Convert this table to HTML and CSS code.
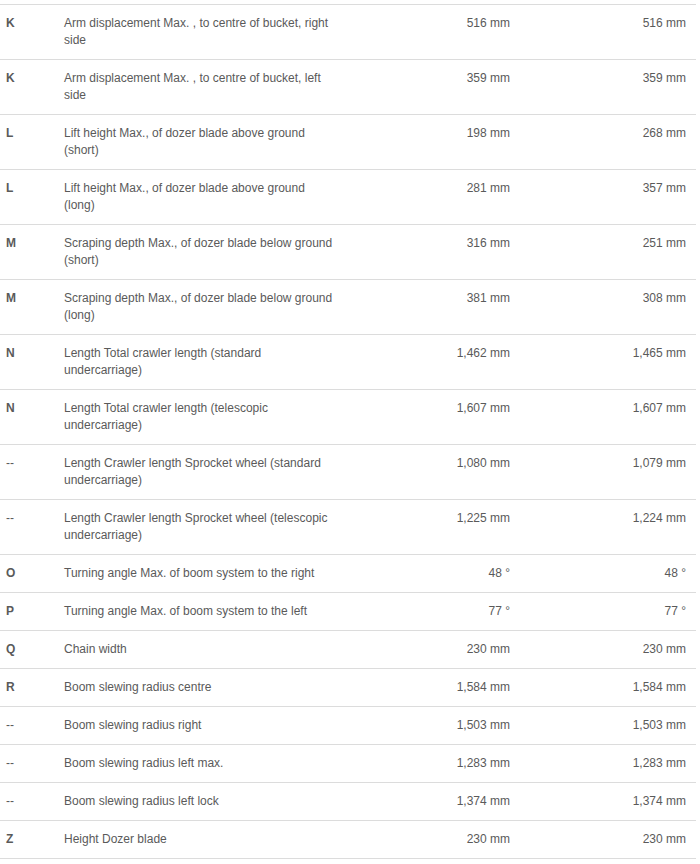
FILE: index.html
```html
<!DOCTYPE html>
<html lang="en">
<head>
<meta charset="utf-8">
<title>Dimensions</title>
<link rel="stylesheet" href="styles.css">
</head>
<body>
<div class="wrap">
<table class="spec">
<colgroup><col class="c-key"><col class="c-desc"><col class="c-val1"><col class="c-val2"></colgroup>
<tbody>
<tr><td class="key">K</td><td class="desc">Arm displacement Max. , to centre of bucket, right side</td><td class="val">516 mm</td><td class="val">516 mm</td></tr>
<tr><td class="key">K</td><td class="desc">Arm displacement Max. , to centre of bucket, left side</td><td class="val">359 mm</td><td class="val">359 mm</td></tr>
<tr><td class="key">L</td><td class="desc">Lift height Max., of dozer blade above ground (short)</td><td class="val">198 mm</td><td class="val">268 mm</td></tr>
<tr><td class="key">L</td><td class="desc">Lift height Max., of dozer blade above ground (long)</td><td class="val">281 mm</td><td class="val">357 mm</td></tr>
<tr><td class="key">M</td><td class="desc">Scraping depth Max., of dozer blade below ground (short)</td><td class="val">316 mm</td><td class="val">251 mm</td></tr>
<tr><td class="key">M</td><td class="desc">Scraping depth Max., of dozer blade below ground (long)</td><td class="val">381 mm</td><td class="val">308 mm</td></tr>
<tr><td class="key">N</td><td class="desc">Length Total crawler length (standard undercarriage)</td><td class="val">1,462 mm</td><td class="val">1,465 mm</td></tr>
<tr><td class="key">N</td><td class="desc">Length Total crawler length (telescopic undercarriage)</td><td class="val">1,607 mm</td><td class="val">1,607 mm</td></tr>
<tr><td class="key dash">--</td><td class="desc">Length Crawler length Sprocket wheel (standard undercarriage)</td><td class="val">1,080 mm</td><td class="val">1,079 mm</td></tr>
<tr><td class="key dash">--</td><td class="desc">Length Crawler length Sprocket wheel (telescopic undercarriage)</td><td class="val">1,225 mm</td><td class="val">1,224 mm</td></tr>
<tr><td class="key">O</td><td class="desc">Turning angle Max. of boom system to the right</td><td class="val">48 °</td><td class="val">48 °</td></tr>
<tr><td class="key">P</td><td class="desc">Turning angle Max. of boom system to the left</td><td class="val">77 °</td><td class="val">77 °</td></tr>
<tr><td class="key">Q</td><td class="desc">Chain width</td><td class="val">230 mm</td><td class="val">230 mm</td></tr>
<tr><td class="key">R</td><td class="desc">Boom slewing radius centre</td><td class="val">1,584 mm</td><td class="val">1,584 mm</td></tr>
<tr><td class="key dash">--</td><td class="desc">Boom slewing radius right</td><td class="val">1,503 mm</td><td class="val">1,503 mm</td></tr>
<tr><td class="key dash">--</td><td class="desc">Boom slewing radius left max.</td><td class="val">1,283 mm</td><td class="val">1,283 mm</td></tr>
<tr><td class="key dash">--</td><td class="desc">Boom slewing radius left lock</td><td class="val">1,374 mm</td><td class="val">1,374 mm</td></tr>
<tr><td class="key">Z</td><td class="desc">Height Dozer blade</td><td class="val">230 mm</td><td class="val">230 mm</td></tr>
</tbody>
</table>
</div>
</body>
</html>
```
FILE: styles.css
```css
html, body {
  margin: 0;
  padding: 0;
  background: #ffffff;
}

.wrap {
  padding-top: 4px;
  width: 696px;
}

.spec {
  width: 696px;
  border-collapse: collapse;
  table-layout: fixed;
  font-family: "Liberation Sans", Arial, sans-serif;
  font-size: 12px;
  line-height: 17px;
  color: #5a5a5a;
}

.c-key { width: 54px; }
.c-desc { width: 292px; }
.c-val1 { width: 174px; }
.c-val2 { width: 176px; }

.spec tr {
  border-top: 1px solid #dcdcdc;
  border-bottom: 1px solid #dcdcdc;
}

.spec td {
  padding: 10px 10px 10px 10px;
  vertical-align: top;
}

.spec td.key {
  padding-left: 6px;
  padding-right: 0;
  font-weight: bold;
  color: #5a5a5a;
}

.spec td.key.dash {
  font-weight: normal;
}

.spec td.val {
  text-align: right;
}
```
